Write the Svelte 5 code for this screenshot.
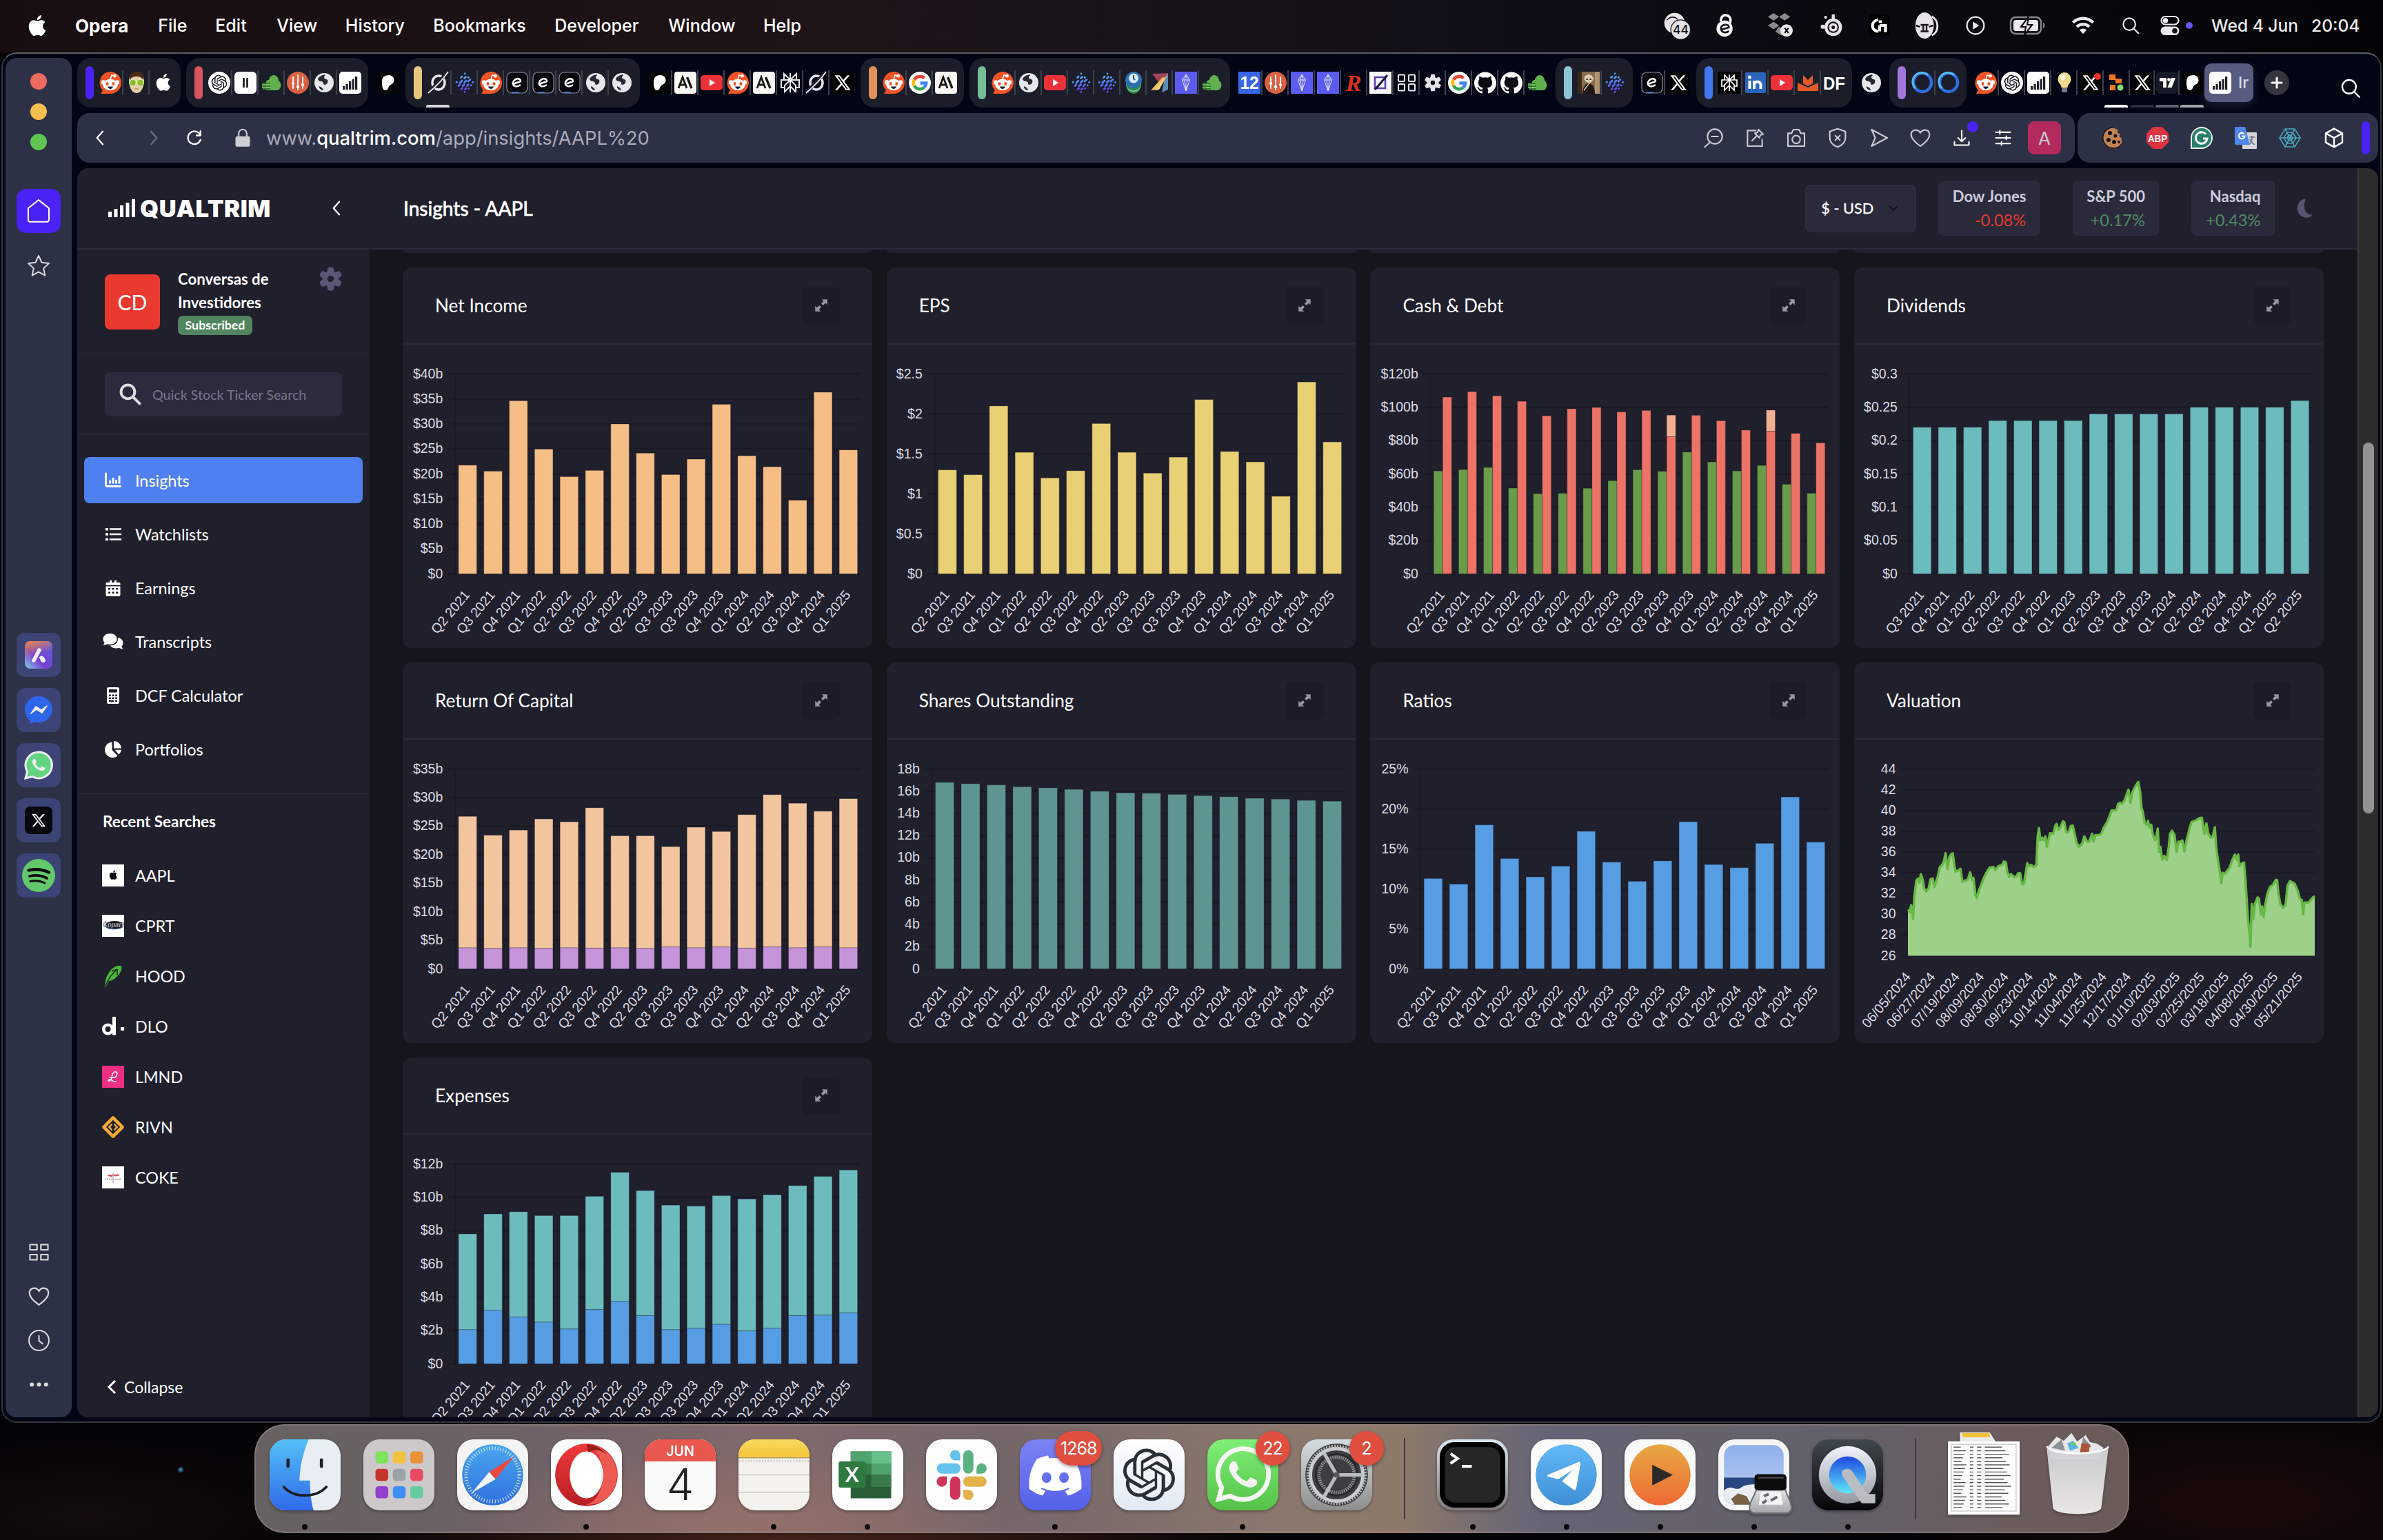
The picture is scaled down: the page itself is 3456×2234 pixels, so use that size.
<script>
  const P = {
    apple: 'M12.152 6.896c-.948 0-2.415-1.078-3.96-1.04-2.04.027-3.91 1.183-4.961 3.014-2.117 3.675-.546 9.103 1.519 12.09 1.013 1.454 2.208 3.09 3.792 3.039 1.52-.065 2.09-.987 3.935-.987 1.831 0 2.35.987 3.96.948 1.637-.026 2.676-1.48 3.676-2.948 1.156-1.688 1.636-3.325 1.662-3.415-.039-.013-3.182-1.221-3.22-4.857-.026-3.04 2.48-4.494 2.597-4.559-1.429-2.09-3.623-2.324-4.39-2.376-2-.156-3.675 1.09-4.61 1.09zM15.53 3.83c.843-1.012 1.4-2.427 1.245-3.83-1.207.052-2.662.805-3.532 1.818-.78.896-1.454 2.338-1.273 3.714 1.338.104 2.715-.688 3.559-1.701',
    x: 'M18.901 1.153h3.68l-8.04 9.19L24 22.846h-7.406l-5.8-7.584-6.638 7.584H.474l8.6-9.83L0 1.154h7.594l5.243 6.932ZM17.61 20.644h2.039L6.486 3.24H4.298Z',
    gpt: 'M22.2819 9.8211a5.9847 5.9847 0 0 0-.5157-4.9108 6.0462 6.0462 0 0 0-6.5098-2.9A6.0651 6.0651 0 0 0 4.9807 4.1818a5.9847 5.9847 0 0 0-3.9977 2.9 6.0462 6.0462 0 0 0 .7427 7.0966 5.98 5.98 0 0 0 .511 4.9107 6.051 6.051 0 0 0 6.5146 2.9001A5.9847 5.9847 0 0 0 13.2599 24a6.0557 6.0557 0 0 0 5.7718-4.2058 5.9894 5.9894 0 0 0 3.9977-2.9001 6.0557 6.0557 0 0 0-.7475-7.0729zm-9.022 12.6081a4.4755 4.4755 0 0 1-2.8764-1.0408l.1419-.0804 4.7783-2.7582a.7948.7948 0 0 0 .3927-.6813v-6.7369l2.02 1.1686a.071.071 0 0 1 .038.052v5.5826a4.504 4.504 0 0 1-4.4945 4.4944zm-9.6607-4.1254a4.4708 4.4708 0 0 1-.5346-3.0137l.142.0852 4.783 2.7582a.7712.7712 0 0 0 .7806 0l5.8428-3.3685v2.3324a.0804.0804 0 0 1-.0332.0615L9.74 19.9502a4.4992 4.4992 0 0 1-6.1408-1.6464zM2.3408 7.8956a4.485 4.485 0 0 1 2.3655-1.9728V11.6a.7664.7664 0 0 0 .3879.6765l5.8144 3.3543-2.0201 1.1685a.0757.0757 0 0 1-.071 0l-4.8303-2.7865A4.504 4.504 0 0 1 2.3408 7.872zm16.5963 3.8558L13.1038 8.364 15.1192 7.2a.0757.0757 0 0 1 .071 0l4.8303 2.7913a4.4944 4.4944 0 0 1-.6765 8.1042v-5.6772a.79.79 0 0 0-.407-.667zm2.0107-3.0231l-.142-.0852-4.7735-2.7818a.7759.7759 0 0 0-.7854 0L9.409 9.2297V6.8974a.0662.0662 0 0 1 .0284-.0615l4.8303-2.7866a4.4992 4.4992 0 0 1 6.6802 4.66zM8.3065 12.863l-2.02-1.1638a.0804.0804 0 0 1-.038-.0567V6.0742a4.4992 4.4992 0 0 1 7.3757-3.4537l-.142.0805L8.704 5.459a.7948.7948 0 0 0-.3927.6813zm1.0976-2.3654l2.602-1.4998 2.6069 1.4998v2.9994l-2.5974 1.4997-2.6067-1.4997Z',
    github: 'M12 .297c-6.63 0-12 5.373-12 12 0 5.303 3.438 9.8 8.205 11.385.6.113.82-.258.82-.577 0-.285-.01-1.04-.015-2.04-3.338.724-4.042-1.61-4.042-1.61C4.422 18.07 3.633 17.7 3.633 17.7c-1.087-.744.084-.729.084-.729 1.205.084 1.838 1.236 1.838 1.236 1.07 1.835 2.809 1.305 3.495.998.108-.776.417-1.305.76-1.605-2.665-.3-5.466-1.332-5.466-5.93 0-1.31.465-2.38 1.235-3.22-.135-.303-.54-1.523.105-3.176 0 0 1.005-.322 3.3 1.23.96-.267 1.98-.399 3-.405 1.02.006 2.04.138 3 .405 2.28-1.552 3.285-1.23 3.285-1.23.645 1.653.24 2.873.12 3.176.765.84 1.23 1.91 1.23 3.22 0 4.61-2.805 5.625-5.475 5.92.42.36.81 1.096.81 2.22 0 1.606-.015 2.896-.015 3.286 0 .315.21.69.825.57C20.565 22.092 24 17.592 24 12.297c0-6.627-5.373-12-12-12',
    phone: 'M17.472 14.382c-.297-.149-1.758-.867-2.03-.967-.273-.099-.471-.148-.67.15-.197.297-.767.966-.94 1.164-.173.199-.347.223-.644.075-.297-.15-1.255-.463-2.39-1.475-.883-.788-1.48-1.761-1.653-2.059-.173-.297-.018-.458.13-.606.134-.133.298-.347.446-.52.149-.174.198-.298.298-.497.099-.198.05-.371-.025-.52-.075-.149-.669-1.612-.916-2.207-.242-.579-.487-.5-.669-.51-.173-.008-.371-.01-.57-.01-.198 0-.52.074-.792.372-.272.297-1.04 1.016-1.04 2.479 0 1.462 1.065 2.875 1.213 3.074.149.198 2.096 3.2 5.077 4.487.709.306 1.262.489 1.694.625.712.227 1.36.195 1.871.118.571-.085 1.758-.719 2.006-1.413.248-.694.248-1.289.173-1.413-.074-.124-.272-.198-.57-.347',
    bubble: 'm12.051 21.785h-.004a9.87 9.87 0 01-5.031-1.378l-.361-.214-3.741.982.998-3.648-.235-.374a9.86 9.86 0 01-1.51-5.26c.001-5.45 4.436-9.884 9.888-9.884 2.64 0 5.122 1.03 6.988 2.898a9.825 9.825 0 012.893 6.994c-.003 5.45-4.437 9.884-9.885 9.884m8.413-18.297A11.815 11.815 0 0012.05 0C5.495 0 .16 5.335.157 11.892c0 2.096.547 4.142 1.588 5.945L.057 24l6.305-1.654a11.882 11.882 0 005.683 1.448h.005c6.554 0 11.89-5.335 11.893-11.893a11.821 11.821 0 00-3.48-8.413z',
    discord: 'M20.317 4.3698a19.7913 19.7913 0 00-4.8851-1.5152.0741.0741 0 00-.0785.0371c-.211.3753-.4447.8648-.6083 1.2495-1.8447-.2762-3.68-.2762-5.4868 0-.1636-.3933-.4058-.8742-.6177-1.2495a.077.077 0 00-.0785-.037 19.7363 19.7363 0 00-4.8852 1.515.0699.0699 0 00-.0321.0277C.5334 9.0458-.319 13.5799.0992 18.0578a.0824.0824 0 00.0312.0561c2.0528 1.5076 4.0413 2.4228 5.9929 3.0294a.0777.0777 0 00.0842-.0276c.4616-.6304.8731-1.2952 1.226-1.9942a.076.076 0 00-.0416-.1057c-.6528-.2476-1.2743-.5495-1.8722-.8923a.077.077 0 01-.0076-.1277c.1258-.0943.2517-.1923.3718-.2914a.0743.0743 0 01.0776-.0105c3.9278 1.7933 8.18 1.7933 12.0614 0a.0739.0739 0 01.0785.0095c.1202.099.246.1981.3728.2924a.077.077 0 01-.0066.1276 12.2986 12.2986 0 01-1.873.8914.0766.0766 0 00-.0407.1067c.3604.698.7719 1.3628 1.225 1.9932a.076.076 0 00.0842.0286c1.961-.6067 3.9495-1.5219 6.0023-3.0294a.077.077 0 00.0313-.0552c.5004-5.177-.8382-9.6739-3.5485-13.6604a.061.061 0 00-.0312-.0286zM8.02 15.3312c-1.1825 0-2.1569-1.0857-2.1569-2.419 0-1.3332.9555-2.4189 2.157-2.4189 1.2108 0 2.1757 1.0952 2.1568 2.419 0 1.3332-.9555 2.4189-2.1569 2.4189zm7.9748 0c-1.1825 0-2.1569-1.0857-2.1569-2.419 0-1.3332.9554-2.4189 2.1569-2.4189 1.2108 0 2.1757 1.0952 2.1568 2.419 0 1.3332-.946 2.4189-2.1568 2.4189Z'
  };

  const spin = (n, markup, c = 16) =>
    Array.from({ length: n }, (_, i) => `<g transform="rotate(${(i * 360) / n} ${c} ${c})">${markup}</g>`).join('');
  const bars = (color) =>
    [[5, 21, 5], [9.5, 18, 8], [14, 14, 12], [18.5, 11, 15], [23, 7, 19]]
      .map(([x, y, h]) => `<rect x="${x}" y="${y}" width="3.2" height="${h}" fill="${color}"/>`).join('');
  const ui = (d, w = 1.6, extra = '') =>
    `<path d="${d}" fill="none" stroke="currentColor" stroke-width="${w}" stroke-linecap="round" stroke-linejoin="round"/>${extra}`;

  // name: [viewBox size, markup]
  const glyphs = {
    reddit: [32, `<path d="M16 0a16 16 0 1 1 0 32H2l3-5A16 16 0 0 1 16 0z" fill="#f05326"/><path d="M16 11l2-6 4 1" stroke="#fff" stroke-width="1.6" fill="none"/><circle cx="22.5" cy="6.2" r="2.4" fill="#fff"/><circle cx="6" cy="15.5" r="3.2" fill="#fff"/><circle cx="26" cy="15.5" r="3.2" fill="#fff"/><ellipse cx="16" cy="19" rx="10.8" ry="8.2" fill="#fff"/><ellipse cx="11.6" cy="17.6" rx="2.1" ry="2.6" fill="#f05326"/><ellipse cx="20.4" cy="17.6" rx="2.1" ry="2.6" fill="#f05326"/><path d="M12 21.6h8c-.6 2.400-2 3.400-4 3.400s-3.400-1-4-3.400z" fill="#22252b"/>`],
    avatar: [32, `<path d="M5 12c0-6 4-9 11-9s11 3 11 9c0 8-3 19-11 19S5 20 5 12z" fill="#e6d0a8"/><path d="M6 12C4 4 9 0 16 0c8 0 12 4 10 12-3-4-6-5-10-5S9 8 6 12z" fill="#4a2b17"/><circle cx="10.500" cy="16" r="4.800" fill="#8bbf2f" stroke="#e9efc8" stroke-width="1"/><circle cx="21.500" cy="16" r="4.800" fill="#8bbf2f" stroke="#e9efc8" stroke-width="1"/><path d="M13 25h6" stroke="#b98e63" stroke-width="1.500"/>`],
    apple: [32, `<g transform="translate(4.500 3) scale(1.030)"><path d="${P.apple}" fill="#fff"/></g>`],
    gpt: [32, `<circle cx="16" cy="16" r="16" fill="#fff"/><g transform="translate(4.600 4.600) scale(.95)"><path d="${P.gpt}" fill="#15151a"/></g>`],
    pause: [32, `<rect width="32" height="32" rx="6" fill="#fff"/><path d="M13.500 9v14M18.500 9v14" stroke="#15151a" stroke-width="2.600"/>`],
    money: [32, `<path d="M8 26V14c2-2 3-2 4-2 1-5 4-7 7-7 4 0 7 4 7 8 3 2 4 6 3 9-1 3-3 5-6 5H8z" fill="#61b04e"/><path d="M2 17h11M2 21h12M3 25h11" stroke="#2f7a2f" stroke-width="1.800"/><path d="M2 19h10M2 23h11" stroke="#8bd173" stroke-width="1.300"/>`],
    fork: [32, `<circle cx="16" cy="16" r="16" fill="#dc6043"/><path d="M9 8v9M16 5v21M23 8v9M9 17v7M23 17v7" stroke="#fff" stroke-width="1.800" stroke-linecap="round"/><circle cx="9" cy="17" r="2" fill="#fff"/><circle cx="23" cy="19" r="2" fill="#fff"/><circle cx="16" cy="22" r="2.200" fill="#fff"/>`],
    globe: [32, `<circle cx="16" cy="16" r="14" fill="#e6e7ea"/><path d="M17 4c-4 1-9 3-10 7 2 4 5 2 7 4 2 1 0 4 3 4 4-1 5-4 4-7-2-2-5-1-5-4 0-2 3-2 1-4zM9 21c2 1 6 3 6 6-4-.5-6.500-3-6-6z" fill="#262a37"/>`],
    qualtrim: [32, `<rect width="32" height="32" rx="5" fill="#fff"/>${bars('#20202c')}`],
    patreon: [32, `<rect width="32" height="32" rx="3" fill="#050505"/><path d="M8 14c0-6 4-9 10-9 5 0 8 4 7.500 8-.5 4-4 5.500-6.500 7-2 2-2 7-6 7-5 0-5-8-5-13z" fill="#fff"/>`],
    slashO: [32, `<ellipse cx="16" cy="16" rx="9" ry="10" fill="none" stroke="#e8e8ee" stroke-width="3.400"/><path d="M29 1L2 30" stroke="#20222e" stroke-width="5"/><path d="M30 0C24 9 14 20 1 31" stroke="#e8e8ee" stroke-width="1.800" fill="none"/>`],
    diamonds: [32, `<g stroke-width="2.800" stroke-linecap="round"><path d="M16 3v.1M10.500 8.500l1.500-1.500M15.500 9.500l2-2M21 8l.5.5" stroke="#5aa0f2"/><path d="M4 15.500l.5-.5M9 16l3-3M15.500 15.500l2.500-2.500M21 14l3-2.500M27.500 15.500l.3-.3" stroke="#5486f5"/><path d="M7 20.500l2-2M13 21l2.500-2.500M19.500 20.500l2-2M25 20l.3-.3" stroke="#5a6bf3"/><path d="M11 25.500l1.500-1.500M16.500 25.500l1.500-1.500M21.500 24.500l.3-.3M16 29.500v.1" stroke="#6d4bf0"/></g>`],
    e: [32, `<rect x="1" y="1" width="30" height="30" rx="7" fill="#08080c" stroke="#8d8da0" stroke-width="1.200"/><path d="M8 30h10" stroke="#3c8cf0" stroke-width="1.600"/><path d="M10 18l11-4c0-3-3-4.500-6-3.500S9 15 10 18c1 3.500 6 4.500 10 1.500" fill="none" stroke="#fff" stroke-width="2.600" stroke-linecap="round" stroke-linejoin="round"/>`],
    anth: [32, `<rect width="32" height="32" rx="4" fill="#faf9f3"/><path d="M6 24l6-16 6 16M8.500 19h7" fill="none" stroke="#1c1a18" stroke-width="2.800"/><path d="M18.500 8l6.500 16" stroke="#1c1a18" stroke-width="3.400"/>`],
    youtube: [32, `<rect y="5" width="32" height="22" rx="5" fill="#ec3139"/><path d="M13 11l8 5-8 5z" fill="#fff"/>`],
    perplex: [32, `<g fill="none" stroke="#e8e8ee" stroke-width="2"><path d="M16 2v28M7 3l9 9 9-9v9H7zM7 12H3v11h5M25 12h4v11h-5M16 12l-8 8v9l8-8 8 8v-9z"/></g>`],
    perplexB: [32, `<rect width="32" height="32" fill="#000"/><g fill="none" stroke="#fff" stroke-width="1.700"><path d="M16 4v24M9 5l7 7 7-7v7H9zM9 12H5v9h4M23 12h4v9h-4M16 12l-7 7v8l7-7 7 7v-8z"/></g>`],
    x: [32, `<rect width="32" height="32" fill="#000"/><g transform="translate(4.500 4) scale(.97 1)"><path d="${P.x}" fill="#f0f0f3"/></g>`],
    xDot: [32, `<rect width="32" height="32" fill="#000"/><g transform="translate(4.500 4) scale(.97 1)"><path d="${P.x}" fill="#f0f0f3"/></g><circle cx="26" cy="7" r="5" fill="#e8302c"/>`],
    google: [32, `<circle cx="16" cy="16" r="16" fill="#fff"/><g fill="none" stroke-width="4.600"><path d="M22.500 9.500A9.200 9.200 0 0 0 8 11.500" stroke="#ea4335"/><path d="M8 11.500a9.200 9.200 0 0 0 0 9" stroke="#fbbc05"/><path d="M8 20.500a9.200 9.200 0 0 0 14 2.500" stroke="#34a853"/><path d="M22 23a9.200 9.200 0 0 0 3.200-6.500H16.500" stroke="#4285f4"/></g>`],
    stack: [32, `<circle cx="16" cy="22" r="10" fill="#2f8a43"/><circle cx="16" cy="18" r="11" fill="#9ad0a5"/><circle cx="16" cy="16.500" r="11" fill="#2e8a55"/><circle cx="16" cy="12" r="12" fill="#2a6fae"/><circle cx="16" cy="9.500" r="7" fill="#dbe9f4"/><path d="M16 5v5l2 2" stroke="#2a4f80" stroke-width="2" fill="none"/>`],
    arrow: [32, `<path d="M5 3l23-1-1 14L14 15z" fill="#a3435a"/><path d="M3 27L20 8l5 1-11 17z" fill="#eac15b"/><path d="M28 3v23l-9 4 4-20z" fill="#5d8cb8"/><path d="M28 3L9 27l6-1z" fill="#f3d48a"/>`],
    violet: [32, `<rect width="32" height="32" fill="#5a5cf0"/><path d="M16 4l5.500 8-5.500 16-5.500-16zM10.500 12h11M16 4l-2 8 2 16 2-16z" fill="none" stroke="#e3e3ff" stroke-width="1"/>`],
    twelve: [32, `<rect width="32" height="32" fill="#3a66e8"/><text x="16" y="25" font-family="Liberation Sans, sans-serif" font-weight="700" font-size="25" fill="#fff" text-anchor="middle" textLength="27" lengthAdjust="spacingAndGlyphs">12</text>`],
    r: [32, `<text x="15" y="28" font-family="Liberation Serif, serif" font-style="italic" font-weight="700" font-size="34" fill="#d9301f" text-anchor="middle">R</text>`],
    z: [32, `<rect width="32" height="32" fill="#f5f5fa"/><path d="M8 8h15v16H8z" fill="none" stroke="#5b3fb0" stroke-width="2.500"/><path d="M8 26L26 5" stroke="#1c1740" stroke-width="3"/>`],
    grid: [32, `<g fill="none" stroke="#e9e9ef" stroke-width="2"><rect x="4" y="4.500" width="9" height="9.500" rx="1.500"/><rect x="19" y="4.500" width="9" height="9.500" rx="1.500"/><rect x="4" y="18" width="9" height="9.500" rx="1.500"/><rect x="19" y="18" width="9" height="9.500" rx="1.500"/></g>`],
    gear: [32, `<circle cx="16" cy="16" r="7" fill="none" stroke="currentColor" stroke-width="6"/>${spin(6, '<path d="M12 8l1.300-5.500q2.700-.8 5.400 0L20 8z" fill="currentColor" stroke="currentColor" stroke-width="1.500" stroke-linejoin="round"/>')}`],
    gearTab: [32, `<circle cx="16" cy="16" r="5.700" fill="none" stroke="#e3e4e8" stroke-width="5"/>${spin(6, '<path d="M13 9l1-4.500h4L19 9z" fill="#e3e4e8" stroke="#e3e4e8" stroke-width="1.500" stroke-linejoin="round"/>')}`],
    github: [32, `<circle cx="16" cy="16" r="15" fill="#0b0c14"/><g transform="scale(1.333)"><path d="${P.github}" fill="#fff"/></g>`],
    photo: [32, `<rect width="32" height="32" fill="#8a6d4e"/><rect width="6" height="32" fill="#3a281a"/><rect x="25" width="7" height="32" fill="#b09472"/><ellipse cx="16" cy="10" rx="6.500" ry="6" fill="#d5cbb8"/><path d="M7 32c0-9 4-15 9-15s9 5 9 15z" fill="#1d1815"/><path d="M12.500 11h2.500M17.500 11H20" stroke="#3a2c20" stroke-width="2"/><path d="M9 27L23 9" stroke="#e3cba0" stroke-width="1.300"/>`],
    linkedin: [32, `<rect x="1" y="1" width="30" height="30" rx="2" fill="#2a66bd"/><path d="M7.500 13v12M14 13v12M14 19c0-6 9.500-6 9.500 0v6" stroke="#fff" stroke-width="4" fill="none"/><circle cx="7.500" cy="8" r="2.500" fill="#fff"/>`],
    fox: [32, `<path d="M9 5l7 7 7-7v14H9z" fill="#e35b25"/><path d="M1 16h30v12H1z" fill="#e35b25"/><path d="M1 16h6l9 5 9-5h6l-15 7z" fill="#1b1d29"/>`],
    df: [32, `<text x="16" y="25.500" font-family="Liberation Sans, sans-serif" font-weight="700" font-size="26" fill="#fff" text-anchor="middle" textLength="32" lengthAdjust="spacingAndGlyphs">DF</text>`],
    ring: [32, `<ellipse cx="16" cy="15.500" rx="13" ry="13.500" fill="none" stroke="#2c6fdf" stroke-width="4.500"/><path d="M6 24A13 13 0 0 1 24 5" fill="none" stroke="#58b8f0" stroke-width="3"/>`],
    bulb: [32, `<path d="M16 1a9.500 9.500 0 0 1 9.500 10c0 6-5 7-5 12h-9c0-5-5-6-5-12A9.500 9.500 0 0 1 16 1z" fill="#f7d98a"/><ellipse cx="14" cy="8" rx="4" ry="5" fill="#fff6da"/><rect x="12" y="23" width="8" height="7" rx="2" fill="#777a80"/>`],
    blocks: [32, `<g fill="#ee7623"><rect x="5" y="4" width="9" height="8"/><rect x="14" y="10" width="9" height="7"/><rect x="6" y="19" width="8" height="8"/></g><circle cx="21" cy="23" r="4.500" fill="#7ddc72"/>`],
    tv: [32, `<rect width="32" height="32" rx="5" fill="#161a26"/><path d="M5 9h10v14h-5v-9H5z" fill="#fff"/><circle cx="18.500" cy="11.500" r="2.300" fill="#fff"/><path d="M22 9h6l-5.500 14h-6z" fill="#fff"/>`],
    plus: [36, `<circle cx="18" cy="18" r="18" fill="#33353f"/><path d="M18 11v14M11 18h14" stroke="#fff" stroke-width="3" stroke-linecap="round"/>`],
    // browser chrome
    search: [24, ui('M10.500 3.500a7 7 0 1 1 0 14 7 7 0 0 1 0-14zM15.700 15.700L21 21', 1.7)],
    searchBold: [24, ui('M9.500 2.500a7 7 0 1 1 0 14 7 7 0 0 1 0-14zM15 15l6.500 6.500', 2.8)],
    left: [24, ui('M14.500 4L7.500 12l7 8', 2)],
    right: [24, ui('M9.500 4l7 8-7 8', 2)],
    down: [24, ui('M4 8l8 8 8-8', 2.6)],
    reload: [24, ui('M19.500 14.500A8 8 0 1 1 19 8M19.500 3.500V9h-5', 2)],
    lock: [24, `<rect x="3" y="10" width="18" height="13" rx="2" fill="currentColor"/><path d="M7 11V6.500a5 5 0 0 1 10 0V11" fill="none" stroke="currentColor" stroke-width="1.800"/>`],
    zoomOut: [24, ui('M13.500 2.500a8 8 0 1 1 0 16 8 8 0 0 1 0-16zM8 17L2.500 22M10 10.500h7')],
    note: [24, ui('M13 4H4v17h16v-7M9 15l5-5M12 7l5 5 1-3 3-1-5-5-1 3z')],
    camera: [24, ui('M3 7h4l2-4h6l2 4h4v14H3zM12 9.500a4.300 4.300 0 1 1 0 8.600 4.300 4.300 0 0 1 0-8.600z')],
    shield: [24, ui('M12 2l8.500 3v7c0 5-3.500 8-8.500 10-5-2-8.500-5-8.500-10V5zM9.500 9.500l5 5M14.500 9.500l-5 5')],
    send: [24, ui('M4 3l17 9-17 9 4-9z')],
    heart: [24, ui('M12 21C5 16 2 12.500 2 8.500 2 3 9 1.500 12 6.500c3-5 10-3.500 10 2C22 12.500 19 16 12 21z')],
    download: [24, ui('M12 3v13M7.500 12l4.500 4.500 4.500-4.500M3 17v4h18v-4', 1.800)],
    sliders: [24, ui('M3 5h18M3 12h18M3 19h18M8 3v4M16 10v4M10 17v4', 1.800)],
    cube: [24, ui('M12 2l9 5v10l-9 5-9-5V7zM3 7l9 5 9-5M12 12v10', 1.800)],
    home: [24, ui('M2.500 9.500L12 2l9.500 7.500V20a2 2 0 0 1-2 2h-15a2 2 0 0 1-2-2z', 1.300)],
    star: [24, ui('M12 2l3 6.500 7 .8-5.200 4.800 1.400 7-6.200-3.500-6.200 3.500 1.400-7L2 9.300l7-.8z', 1.300)],
    apps: [24, ui('M2.500 4h7.500v5.500H2.500zM14 4h7.500v5.500H14zM2.500 14.500h7.500V20H2.500zM14 14.500h7.500V20H14z', 1.500)],
    clock: [24, ui('M12 1.500a10.500 10.500 0 1 1 0 21 10.500 10.500 0 0 1 0-21zM12 7v5.500l4 3', 1.500)],
    dots: [24, `<circle cx="4.500" cy="12" r="2.200" fill="currentColor"/><circle cx="12" cy="12" r="2.200" fill="currentColor"/><circle cx="19.500" cy="12" r="2.200" fill="currentColor"/>`],
    cookie: [32, `<path d="M17 1a15 15 0 1 0 13 20c-3 0-3-3-2-5-4 0-4-3-2-6-4 0-5-3-3-6-3 0-5-1-6-3z" fill="#c08457"/><g fill="#1b120d"><circle cx="11" cy="9" r="3"/><circle cx="19" cy="13" r="2.600"/><circle cx="9" cy="19" r="3"/><circle cx="17" cy="22" r="3"/><circle cx="24" cy="22" r="2"/></g><path d="M17 1a15 15 0 1 0 13 20" fill="none" stroke="#1b120d" stroke-width="1.300"/>`],
    abp: [32, `<path d="M9.500 0h13L32 9.500v13L22.500 32h-13L0 22.500v-13z" fill="#dd3442"/><text x="16" y="21.500" font-family="Liberation Sans, sans-serif" font-weight="700" font-size="15" fill="#fff" text-anchor="middle" textLength="28" lengthAdjust="spacingAndGlyphs">ABP</text>`],
    grammarly: [32, `<path d="M16 0a16 16 0 0 1 0 32H0V16A16 16 0 0 1 16 0z" fill="#e8efec"/><path d="M16 2a14 14 0 0 1 0 28H2V16A14 14 0 0 1 16 2z" fill="#2a7f6a"/><path d="M22 10.500A8.300 8.300 0 1 0 24 17h-6" fill="none" stroke="#fff" stroke-width="3"/>`],
    translate: [32, `<rect x="11" y="8" width="21" height="24" rx="1" fill="#d5d7da"/><path d="M21 15h9M25 13v3c0 5-2 8-5 10M22 18c1 4 4 6 7 8" stroke="#6d7885" stroke-width="1.700" fill="none"/><path d="M0 0h15l7 26H2a2 2 0 0 1-2-2z" fill="#4f86ec"/><path d="M13.500 10.200a4.300 4.300 0 1 0 1 3.300h-4" fill="none" stroke="#fff" stroke-width="2"/>`],
    web: [32, `<g fill="none" stroke="#49a6b8" stroke-width="1.600"><path d="M9 3h14l8 13-8 13H9L1 16zM12 8h8l5 8-5 8h-8l-5-8zM14 12h4l2 4-2 4h-4l-2-4zM9 3l14 26M23 3L9 29M1 16h30"/></g>`],
    // panel apps
    aria: [40, `<defs><linearGradient id="ar" x1="0" y1="1" x2="1" y2="0"><stop offset="0" stop-color="#7fd6ea"/><stop offset=".4" stop-color="#7a3ccf"/><stop offset="1" stop-color="#5a63dd"/></linearGradient><linearGradient id="ar2" x1="0" y1="0" x2=".3" y2="1"><stop offset="0" stop-color="#f08a4a"/><stop offset=".6" stop-color="#f08a4a" stop-opacity="0"/></linearGradient></defs><rect width="40" height="40" rx="8" fill="url(#ar)"/><rect width="40" height="40" rx="8" fill="url(#ar2)"/><path d="M13 28L21 13" stroke="#ececf4" stroke-width="5.500" stroke-linecap="round"/><path d="M23.500 22c2 0 5 2 6 6.500-2 3-5 2-6-.5-.5-2-1-3-2-4z" fill="#ececf4" stroke="#ececf4" stroke-width="1.500" stroke-linejoin="round"/>`],
    messenger: [40, `<path d="M20 0c11 0 20 8.500 20 19S31 38 20 38c-2 0-4-.3-6-.8L8 40l-.5-5C3 31 0 26 0 19 0 8.500 9 0 20 0z" fill="#2e66ea"/><path d="M9 25l7-10 8 5 8-6-7 10-8-5z" fill="#eef0fb" stroke="#eef0fb" stroke-width="1.500" stroke-linejoin="round"/>`],
    whatsapp: [40, `<path d="M20 1a19 19 0 1 1-9 35.500L1 39l2.600-9.500A19 19 0 0 1 20 1z" fill="#63d480" stroke="#ececf2" stroke-width="3"/><g transform="translate(1.500 1) scale(1.540)"><path d="${P.phone}" fill="#ececf2"/></g>`],
    xApp: [40, `<rect width="40" height="40" rx="8" fill="#08090d"/><g transform="translate(10 10) scale(.84)"><path d="${P.x}" fill="#e6e6ea"/></g>`],
    spotify: [48, `<circle cx="24" cy="24" r="24" fill="#63c76c"/><g fill="none" stroke="#0c0f0c" stroke-linecap="round"><path d="M9.500 16.500c10-2.500 20-1.500 29.500 3" stroke-width="4.500"/><path d="M11 25c8.500-2 17-1.300 25 3" stroke-width="3.800"/><path d="M12 32.500c7.500-1.500 14-1 21 2.500" stroke-width="3"/></g>`],
    // app navigation
    chart: [24, `<path d="M1.500 2v16.500a2 2 0 0 0 2 2h19" fill="none" stroke="currentColor" stroke-width="2.800" stroke-linecap="round"/><path d="M7.500 12v4.500M12 8v8.500M16.500 11v5.500M21 5v11.500" stroke="currentColor" stroke-width="3"/>`],
    list: [24, `<path d="M8 4.500h15M8 12h15M8 19.500h15" stroke="currentColor" stroke-width="2.600" stroke-linecap="round"/><path d="M1 3h4v3.500H1zM1 10.300h4v3.500H1zM1 17.700h4v3.500H1z" fill="currentColor"/>`],
    calendar: [24, `<path d="M3 4h4V1h3v3h4V1h3v3h4a1.500 1.500 0 0 1 1.500 1.500V8h-21V5.500A1.500 1.500 0 0 1 3 4z" fill="currentColor"/><path d="M1.500 9.500h21V22a2 2 0 0 1-2 2h-17a2 2 0 0 1-2-2z" fill="currentColor"/><path d="M5 12h3v2.500H5zM10.500 12h3v2.500h-3zM16 12h3v2.500h-3zM5 17.500h3V20H5zM10.500 17.500h3V20h-3zM16 17.500h3V20h-3z" fill="#201f2c"/>`],
    chat: [30, `<path d="M10.500 3c6 0 10 3.500 10 8s-4 8-10 8c-1.500 0-3-.2-4.200-.7C4.500 19.500 2.500 20 .5 20c1-1.200 2-2.500 2-4C1 14.500.5 13 .5 11c0-4.500 4-8 10-8z" fill="currentColor"/><path d="M22 9c4.500.7 7.500 3.800 7.500 7.500 0 2-.7 3.600-2 5 0 1.500 1 2.800 2 4-2 0-4-.5-5.800-1.700-1.200.4-2.500.7-4.200.7-4 0-7-1.500-8.500-4 6.500 0 11.500-4 11-11.500z" fill="currentColor"/>`],
    calc: [24, `<rect x="3" y="0" width="18" height="24" rx="2.500" fill="currentColor"/><path d="M6 3h12v4.500H6zM6 10.500h2.800V13H6zM10.600 10.500h2.800V13h-2.800zM15.200 10.500H18V13h-2.800zM6 14.500h2.800V17H6zM10.600 14.500h2.800V17h-2.800zM15.200 14.500H18V17h-2.800zM6 18.700h7.400v2.500H6zM15.200 18.700H18v2.500h-2.800z" fill="#201f2c"/>`],
    pie: [24, `<path d="M10.500 1.500v11.500l8 8.500A11.300 11.300 0 1 1 10.500 1.500z" fill="currentColor"/><path d="M13 0a11 11 0 0 1 11 10.500H13zM14.500 12.800H24a11 11 0 0 1-3.500 6.800z" fill="currentColor"/>`],
    moon: [24, `<path d="M13 1C6 2 3 7 3 12c0 6 4.500 11 11 11 3 0 5-1.300 6.500-3.500C13.500 20.500 8 12 13 1z" fill="currentColor"/>`],
    expand: [24, `<path d="M13 1.500h9.500V11l-3-3-4.500 4-3-3 4-4.500zM11 22.500H1.500V13l3 3L9 12l3 3-4 4.500z" fill="currentColor"/>`],
    tAapl: [32, `<rect width="32" height="32" fill="#fff"/><g transform="translate(9.500 8.500) scale(.56)"><path d="${P.apple}" fill="#111"/></g>`],
    tCprt: [32, `<rect width="32" height="32" fill="#fff"/><ellipse cx="18" cy="15" rx="13" ry="6" fill="#16181c"/><path d="M6 18c5 3 18 4 25-1" stroke="#3a5c8a" fill="none" stroke-width="1.500"/><text x="16" y="18" font-family="Liberation Sans, sans-serif" font-style="italic" font-weight="700" font-size="10" fill="#d9dce0" text-anchor="middle" textLength="30" lengthAdjust="spacingAndGlyphs" stroke="#33363c" stroke-width=".4">Copart</text>`],
    tHood: [32, `<path d="M4 31C5 24 5 18 10 11 14 5 20 0 28 1c1 5-1 11-6 15-3 4-8 7-12 7l-4 8z" fill="#4bb53a"/><path d="M5 30C9 20 14 13 22 6M22 6v9M14 9l8-3" stroke="#1d2b22" stroke-width="1.500" fill="none"/>`],
    tDlo: [32, `<circle cx="8.500" cy="20" r="6.300" fill="none" stroke="#fff" stroke-width="4.600"/><path d="M17.500 2v26.500" stroke="#fff" stroke-width="5"/><rect x="27" y="17" width="5" height="5" fill="#fff"/>`],
    tLmnd: [32, `<rect width="32" height="32" fill="#ec2f80"/><path d="M20 9c-3-1-5 2-5.500 6S12 23 9.500 22s2-3 4.500-1 4 3 6 2M11 17h8c3-3 4-8 1-8" fill="none" stroke="#fff" stroke-width="1.500" stroke-linecap="round"/>`],
    tRivn: [32, `<path d="M16 2.500L29.500 16 16 29.500 2.500 16z" fill="none" stroke="#f0aa35" stroke-width="4.600" stroke-linejoin="round"/><path d="M14.500 10l-6 6 6 6v-3.500L12 16l2.500-2.500zM17.500 10l6 6-6 6v-3.500L20 16l-2.500-2.500z" fill="#f0aa35"/>`],
    tCoke: [32, `<rect width="32" height="32" fill="#fff"/><path d="M9 14c2-3 4 2 6-1s3 2 6 0 2 1 3 0" stroke="#e0393e" stroke-width="2" fill="none"/><path d="M4 18.500h24" stroke="#999" stroke-width="1.500" stroke-dasharray="2 1"/><path d="M16 9v15" stroke="#bbb" stroke-width="1.500"/>`],
    // menu bar
    mCloud: [48, `<circle cx="19" cy="20" r="17" fill="#e6e4e6"/><path d="M6 15c6-7 14-6 18-1" stroke="#1a171c" fill="none" stroke-width="2"/><circle cx="29" cy="31" r="17" fill="#17141a"/><circle cx="29" cy="31" r="15.500" fill="#e6e4e6"/><text x="29" y="38" font-family="Inter, sans-serif" font-size="20" fill="#17141a" text-anchor="middle">44</text>`],
    mE: [40, `<path d="M13 13c0-9 6-11 11-9 5 3 6 8 3 13" fill="none" stroke="#fff" stroke-width="4"/><circle cx="19" cy="25" r="13" fill="#fff"/><path d="M13 27l13-4c0-4-4-5-8-4s-6 5-4 9 8 4 12 1" fill="none" stroke="#16131a" stroke-width="3"/>`],
    mBox: [40, `<path d="M9 0l9 6-9 6-9-6zM27 0l9 6-9 6-9-6zM9 14l9 6-9 6-9-6zM18 22l9 6-5 8-10-6z" fill="#8a888c"/><circle cx="30" cy="28" r="10" fill="#e9e8ea"/><path d="M27 24l6 8M33 24l-6 8" stroke="#111" stroke-width="2.500"/>`],
    mSteel: [40, `<circle cx="22" cy="23" r="15" fill="#e6e4e6"/><circle cx="22" cy="23" r="8.500" fill="none" stroke="#16131a" stroke-width="2.500"/><circle cx="22" cy="23" r="3" fill="#16131a"/><path d="M22 10V1" stroke="#e6e4e6" stroke-width="5"/><circle cx="4" cy="22" r="3.500" fill="#e6e4e6"/><circle cx="9" cy="6" r="2.500" fill="#e6e4e6"/>`],
    mG: [34, `<rect width="34" height="34" rx="8" fill="#000"/><path d="M16 8c-12 2-12 17 0 18M19 13v-4M18 17h9v10M18 17v9" stroke="#fff" stroke-width="4.500" fill="none"/>`],
    mPi: [40, `<path d="M28 6c12 7 11 24 0 29" fill="none" stroke="#e6e4e6" stroke-width="3"/><ellipse cx="17" cy="20" rx="14" ry="20" fill="#e6e4e6"/><path d="M4 20l6 2M24 22l6-2" stroke="#16131a" stroke-width="2.500" fill="none"/><path d="M11 19h12M11 29h12M15 19v10M20 19v10" stroke="#16131a" stroke-width="2.500"/>`],
    mPlay: [32, `<circle cx="16" cy="16" r="13.200" fill="none" stroke="#eceaec" stroke-width="2.400"/><path d="M12 10l10 6-10 6z" fill="#eceaec"/>`],
    mBatt: [52, `<rect x="2" y="14" width="44" height="24" rx="7" fill="none" stroke="#8b888d" stroke-width="2.500"/><rect x="6" y="18" width="36" height="16" rx="3.500" fill="#eceaec"/><path d="M49 22c3 1 3 7 0 8z" fill="#8b888d"/><path d="M28 13L17 28h7l-2 12 11-15h-7z" fill="#eceaec" stroke="#0d0b10" stroke-width="2.200"/>`],
    mWifi: [36, `<g fill="none" stroke="#eceaec" stroke-width="4.600"><path d="M2.500 13.500a22 22 0 0 1 31 0M8.500 20a13.500 13.500 0 0 1 19 0"/></g><path d="M18 31l-5.500-6a8 8 0 0 1 11 0z" fill="#eceaec"/>`],
    mCtl: [28, `<rect x="1.500" y="1" width="25" height="11.500" rx="5.700" fill="none" stroke="#eceaec" stroke-width="2.200"/><circle cx="7.500" cy="6.700" r="3.800" fill="#eceaec"/><rect x=".5" y="15.500" width="27" height="12.500" rx="6.200" fill="#eceaec"/><circle cx="21" cy="21.700" r="3.800" fill="#16131a"/>`]
  };

  // dock artwork on a 100-unit square tile
  const tile = (fill) => `<rect width="100" height="100" rx="23" fill="${fill}"/>`;
  const grad = (id, a, b) =>
    `<defs><linearGradient id="${id}" x1="0" y1="0" x2="0" y2="1"><stop offset="0" stop-color="${a}"/><stop offset="1" stop-color="${b}"/></linearGradient></defs>`;
  const pads = [['#7ee35a', '#f2c23f', '#e8923a'], ['#c4342a', '#9aa3a8', '#e94a63'], ['#9340cf', '#3f8ef5', '#67cba0']];
  const dockArt = {
    finder: grad('dk1', '#54c1f7', '#2f69ea') + tile('#e9edf4') + `<path d="M23 0h32C46 22 43 38 42 58h15c0 14 1 30 5 42H23A23 23 0 0 1 0 77V23A23 23 0 0 1 23 0z" fill="url(#dk1)"/><path d="M26 29v9M73 29v9" stroke="#1d2330" stroke-width="4.500" stroke-linecap="round"/><path d="M20 67c14 16 45 16 60 0" fill="none" stroke="#1a1d26" stroke-width="3.500" stroke-linecap="round"/>`,
    launchpad: tile('#cdc9ca') + pads.map((r, j) => r.map((c, i) => `<rect x="${17 + i * 24.500}" y="${17 + j * 24.500}" width="18" height="17" rx="4.500" fill="${c}"/>`).join('')).join(''),
    safari: grad('dk2', '#4aa7ef', '#2f6fdd') + tile('#f4f4f5') + `<circle cx="50" cy="50" r="43" fill="url(#dk2)"/><circle cx="50" cy="50" r="37.500" fill="none" stroke="#dcebfa" stroke-width="5" stroke-dasharray="1 2.900"/><path d="M80 24L54 56 45 46z" fill="#ea4a3c"/><path d="M20 76l34-20-9-10z" fill="#f1f3f6"/>`,
    opera: grad('dk3', '#f0393b', '#b51f25') + tile('#fff') + `<ellipse cx="50" cy="50" rx="44" ry="44" fill="url(#dk3)"/><path d="M50 8c24 0 43 18 43 42S76 93 50 92c14-4 23-20 23-42S64 12 50 8z" fill="#ee5a52"/><path d="M50 7c12 0 22 6 30 16-8-8-18-10-27-5z" fill="#95201c"/><ellipse cx="50" cy="50" rx="23.500" ry="33" fill="#fff"/>`,
    calendar: tile('#fbfafa') + `<path d="M0 31V23A23 23 0 0 1 23 0h54a23 23 0 0 1 23 23v8z" fill="#e9574e"/><text x="50" y="23" font-family="Inter, sans-serif" font-weight="600" font-size="19" fill="#fff" text-anchor="middle">JUN</text><text x="50" y="85" font-family="Inter, sans-serif" font-weight="300" font-size="61" fill="#222" text-anchor="middle">4</text>`,
    notes: grad('dk4', '#f9d95e', '#f5c838') + tile('#f3f2ed') + `<path d="M0 25v-2A23 23 0 0 1 23 0h54a23 23 0 0 1 23 23v2z" fill="url(#dk4)"/><path d="M0 26h100" stroke="#b39a55" stroke-width="1.500"/><path d="M0 50h100M0 75h100" stroke="#cfcec9" stroke-width="1.500"/><path d="M1 30.500h98" stroke="#bdbbb4" stroke-width="2" stroke-dasharray="2 2"/>`,
    excel: tile('#fff') + `<path d="M26 17h57v66H26z" fill="#2a5e39"/><path d="M26 17h29v17H26z" fill="#4fa36e"/><path d="M55 17h28v17H55z" fill="#66c28a"/><path d="M26 34h29v16H26z" fill="#387e4b"/><path d="M55 34h28v16H55z" fill="#4fa36e"/><path d="M55 50h28v17H55z" fill="#3a7c49"/><rect x="9" y="31" width="38" height="37" rx="3" fill="#2f7a41"/><text x="28" y="60" font-family="Lato, sans-serif" font-weight="700" font-size="29" fill="#fff" text-anchor="middle">X</text>`,
    slack: tile('#fdfdfd') + `<g stroke-width="14.500" stroke-linecap="round"><path d="M22.500 41h19" stroke="#64c3ec"/><path d="M59.500 22.500V41" stroke="#5cb182"/><path d="M59.500 59.500h18.500" stroke="#e3b34a"/><path d="M41 59.500V78" stroke="#cf3459"/></g><path d="M41 15a7.200 7.200 0 0 0 0 14.500h7.200V22A7.200 7.200 0 0 0 41 15z" fill="#64c3ec"/><path d="M85.500 41a7.200 7.200 0 0 0-14.500 0v7.200h7.200A7.200 7.200 0 0 0 85.500 41z" fill="#5cb182"/><path d="M59.500 85.500a7.200 7.200 0 0 0 0-14.500h-7.200v7.200a7.200 7.200 0 0 0 7.200 7.300z" fill="#e3b34a"/><path d="M15 59.500a7.200 7.200 0 0 0 14.500 0v-7.200H22a7.200 7.200 0 0 0-7 7.200z" fill="#cf3459"/>`,
    discord: grad('dk5', '#7b83f2', '#5560ea') + tile('url(#dk5)') + `<g transform="translate(13 14) scale(3.080)"><path d="${P.discord}" fill="#fff"/></g>`,
    chatgpt: grad('dk6', '#ffffff', '#e2e9f3') + tile('url(#dk6)') + `<g transform="translate(13 13) scale(3.080)"><path d="${P.gpt}" fill="#2a3038"/></g>`,
    whatsapp: grad('dk7', '#7fef78', '#55c247') + tile('url(#dk7)') + `<g transform="translate(11 10) scale(3.280)"><path d="${P.phone}" fill="#f5f6f4"/><path d="${P.bubble}" fill="#f5f6f4"/></g>`,
    settings: grad('dk8', '#d4dde2', '#8f8f8d') + tile('url(#dk8)') + `<circle cx="50" cy="50" r="44" fill="#3c3e40"/><circle cx="50" cy="50" r="37" fill="none" stroke="#c7cccf" stroke-width="5"/><circle cx="50" cy="50" r="40.500" fill="none" stroke="#b9bec1" stroke-width="4" stroke-dasharray="1.900 2"/><circle cx="50" cy="50" r="25" fill="none" stroke="#8f9496" stroke-width="5" stroke-dasharray="1.500 1.500"/><circle cx="50" cy="50" r="29" fill="none" stroke="#26282a" stroke-width="2.500"/><path d="M50 50h36M50 50L32 19M50 50L32 81" stroke="#b8bdc0" stroke-width="5"/><circle cx="50" cy="50" r="4" fill="#55585a"/>`,
    terminal: grad('dk9', '#d7e8f2', '#7c7b78') + tile('url(#dk9)') + `<rect x="4" y="4" width="92" height="92" rx="20" fill="#000"/><rect x="11" y="11" width="78" height="78" rx="14" fill="#262626"/><path d="M19 20l10 7-10 7" fill="none" stroke="#fff" stroke-width="4"/><path d="M35 38h14" stroke="#fff" stroke-width="4"/>`,
    telegram: grad('dk10', '#62b9f7', '#3f8fd6') + tile('#fafafa') + `<circle cx="50" cy="50" r="43" fill="url(#dk10)"/><path d="M24 50l43-18c2-1 3 1 3 3l-6 34c-1 3-3 3-5 1L44 59l15-16-20 13-13-3c-3-1-3-2-2-3z" fill="#fff"/>`,
    player: grad('dk11', '#e7a844', '#ee6a33') + tile('#fafafa') + `<circle cx="50" cy="50" r="43" fill="url(#dk11)"/><path d="M39 36l29 14-29 15z" fill="#2b2a28"/>`,
    preview: grad('dk12', '#8fb0ec', '#bcd0f3') + grad('dk12b', '#e4e5e8', '#a4a6aa') + tile('#f6f6f6') + `<rect x="8" y="8" width="84" height="84" rx="15" fill="url(#dk12)"/><path d="M8 54h84v23a15 15 0 0 1-15 15H23A15 15 0 0 1 8 77z" fill="#27457e"/><path d="M8 72c10-10 16 2 24-4s20-4 34-6v30H23A15 15 0 0 1 8 77z" fill="#e9eef4"/><path d="M18 84l10-8 12 4 6 12H23z" fill="#7a6145"/><path d="M54 69h40c2 10 9 18 9 27q0 8-9 8H53q-9 0-9-8c0-9 8-17 10-27z" fill="url(#dk12b)" stroke="#6d6f74" stroke-width="2"/><path d="M60 74h28l3 18H57z" fill="#f4f4f6"/><path d="M64 80l7-3M74 86l9-5M62 90l6-4" stroke="#6a6c70" stroke-width="4"/><path d="M51 54q0-5 6-5h33q6 0 6 5v13q0 5-6 5H57q-6 0-6-5z" fill="#0d0d0e"/><path d="M56 54h36" stroke="#4a4b4e" stroke-width="2"/>`,
    quicktime: grad('dk13', '#41484f', '#060607') + grad('dk13b', '#f1f4ff', '#9498a0') + grad('dk13c', '#1e49e0', '#5fe6fa') + tile('url(#dk13)') + `<circle cx="50" cy="50" r="40.500" fill="url(#dk13b)"/><circle cx="50" cy="50" r="26" fill="url(#dk13c)"/><path d="M43 44c6-5 12-2 15 3l20 30h11v13H70L44 54c-2-4-3-8-1-10z" fill="#b9bcc2"/>`,
    doc: `<path d="M17-10h42l8 13H17z" fill="#e9e9ea"/><path d="M20-9h39v6H20z" fill="#f0c23c"/><path d="M0 3h101v103H0z" fill="#fff"/><path d="M5 7h91v94H5z" fill="none" stroke="#cfcfcf" stroke-width="1.500"/>` +
      Array.from({ length: 18 }, (_, i) => `<path d="M8 ${11 + i * 5}h${10 + ((i * 7) % 9)}M31 ${11 + i * 5}h5M41 ${11 + i * 5}h6M52 ${11 + i * 5}h${24 + ((i * 5) % 14)}" stroke="#55565a" stroke-width="1.400"/>`).join(''),
    trash: grad('dk14', '#cfcfd2', '#f1f0ee') + `<path d="M9 10l12-14 10 6L42-9l8 12 12-9 6 10 10 2 9 6-6 16H14z" fill="#e6e6e8"/><path d="M14 12l14-12 5 16zM58-4l12 14-14 8z" fill="#8f9196"/><path d="M36 6l8-4 8 10-12 4z" fill="#5ab3e0"/><path d="M56 5l12 2-2 14-12-3z" fill="#a9543c"/><path d="M40 8l5-5 4 4z" fill="#7bc950"/><path d="M7 12c8 11 78 11 87 0l-10 84c-2 12-66 12-68 0z" fill="url(#dk14)" opacity=".95"/><path d="M7 10c6 13 80 13 87 0" fill="none" stroke="#fafafa" stroke-width="2.500"/>`
  };

  const menus = [['Opera', 120.3], ['File', 83], ['Edit', 89], ['View', 99.5], ['History', 127.5], ['Bookmarks', 176], ['Developer', 165], ['Window', 137.6], ['Help', 60]];
  const status = [
    ['mCloud', 68, 42], ['mE', 70, 36], ['mBox', 90, 36], ['mSteel', 59, 34], ['mG', 78, 32], ['mPi', 60, 38],
    ['mPlay', 82, 30], ['mBatt', 68, 52], ['mWifi', 94, 34], ['search', 44, 30], ['mCtl', 70, 28]
  ];

  const tabGroups = [
    { color: '#4b22f2', tabs: ['reddit', 'avatar', 'apple'] },
    { color: '#d9545f', tabs: ['gpt', 'pause', 'money', 'fork', 'globe', 'qualtrim'] },
    { tabs: ['patreon'] },
    { color: '#e6c77f', tabs: ['slashO', 'diamonds', 'reddit', 'e', 'e', 'e', 'globe', 'globe'], marks: { 0: '#d6d7dc' } },
    { tabs: ['patreon', 'anth', 'youtube', 'reddit', 'anth', 'perplex', 'slashO', 'x'] },
    { color: '#e3935a', tabs: ['reddit', 'google', 'anth'] },
    { color: '#74bf97', tabs: ['reddit', 'globe', 'youtube', 'diamonds', 'diamonds', 'stack', 'arrow', 'violet', 'money'] },
    { tabs: ['twelve', 'fork', 'violet', 'violet', 'r', 'z', 'grid', 'gearTab', 'google', 'github', 'github', 'money'] },
    { color: '#8cc4d6', tabs: ['photo', 'diamonds'] },
    { tabs: ['e', 'x'] },
    { color: '#4478f0', tabs: ['perplexB', 'linkedin', 'youtube', 'fox', 'df'] },
    { tabs: ['globe'] },
    { color: '#a377dd', tabs: ['ring', 'ring'] },
    { tabs: ['reddit', 'gpt', 'qualtrim', 'bulb', 'xDot', 'blocks', 'x', 'tv', 'patreon'], narrowFrom: 6, marks: { 5: '#ffffff', 6: '#2c2e3a', 7: '#60626c', 8: '#a3a4aa' } }
  ];

  const nav = [['Insights', 'chart'], ['Watchlists', 'list'], ['Earnings', 'calendar'], ['Transcripts', 'chat'], ['DCF Calculator', 'calc'], ['Portfolios', 'pie']];
  const recent = [['AAPL', 'tAapl'], ['CPRT', 'tCprt'], ['HOOD', 'tHood'], ['DLO', 'tDlo'], ['LMND', 'tLmnd'], ['RIVN', 'tRivn'], ['COKE', 'tCoke']];
  const indices = [['Dow Jones', '-0.08%', false], ['S&P 500', '+0.17%', true], ['Nasdaq', '+0.43%', true]];

  const quarters = ['Q2 2021', 'Q3 2021', 'Q4 2021', 'Q1 2022', 'Q2 2022', 'Q3 2022', 'Q4 2022', 'Q2 2023', 'Q3 2023', 'Q3 2023', 'Q4 2023', 'Q1 2024', 'Q2 2024', 'Q3 2024', 'Q4 2024', 'Q1 2025'];
  const divQuarters = ['Q3 2021', 'Q4 2021', 'Q1 2022', 'Q2 2022', 'Q3 2022', 'Q4 2022', 'Q1 2023', 'Q2 2023', 'Q3 2023', 'Q4 2023', 'Q1 2024', 'Q2 2024', 'Q3 2024', 'Q4 2024', 'Q1 2025', 'Q2 2025'];
  const TOP = 42.5, BOTTOM = 332.5, RIGHT = 664.8;

  // stacks: groups of series drawn side by side; series inside a stack pile up
  const charts = [
    { title: 'Net Income', left: 75.8, max: 40, ticks: ['$0', '$5b', '$10b', '$15b', '$20b', '$25b', '$30b', '$35b', '$40b'], labels: quarters,
      stacks: [[{ color: '#f5be85', data: [21.74, 20.55, 34.64, 24.97, 19.45, 20.7, 30, 24.16, 19.87, 22.96, 33.92, 23.64, 21.43, 14.74, 36.35, 24.8] }]] },
    { title: 'EPS', left: 69.3, max: 2.5, ticks: ['$0', '$0.5', '$1', '$1.5', '$2', '$2.5'], labels: quarters,
      stacks: [[{ color: '#e9d074', data: [1.3, 1.24, 2.1, 1.52, 1.2, 1.29, 1.88, 1.52, 1.26, 1.46, 2.18, 1.53, 1.4, 0.97, 2.4, 1.65] }]] },
    { title: 'Cash & Debt', left: 87.3, max: 120, ticks: ['$0', '$20b', '$40b', '$60b', '$80b', '$100b', '$120b'], labels: quarters,
      stacks: [
        [{ color: '#689c48', data: [61.8, 62.6, 63.9, 51.5, 48.1, 48.3, 51.4, 55.9, 62.5, 61.6, 73.1, 67.2, 61.8, 65.1, 53.8, 48.4] }],
        [{ color: '#ec7366', data: [106.1, 109.4, 106.9, 103.6, 94.9, 99.1, 99.9, 97.2, 98.1, 82.4, 95.2, 91.9, 86.3, 85.7, 84.3, 78.6] },
         { color: '#f2b193', data: [0, 0, 0, 0, 0, 0, 0, 0, 0, 12.9, 0, 0, 0, 12.6, 0, 0] }]
      ] },
    { title: 'Dividends', left: 80.4, max: 0.3, ticks: ['$0', '$0.05', '$0.1', '$0.15', '$0.2', '$0.25', '$0.3'], labels: divQuarters,
      stacks: [[{ color: '#6cbcbd', data: [0.22, 0.22, 0.22, 0.23, 0.23, 0.23, 0.23, 0.24, 0.24, 0.24, 0.24, 0.25, 0.25, 0.25, 0.25, 0.26] }]] },
    { title: 'Return Of Capital', left: 75.8, max: 35, ticks: ['$0', '$5b', '$10b', '$15b', '$20b', '$25b', '$30b', '$35b'], labels: quarters,
      stacks: [[{ color: '#c694d8', data: [3.7, 3.6, 3.7, 3.6, 3.7, 3.65, 3.7, 3.6, 3.85, 3.7, 3.85, 3.65, 3.85, 3.7, 3.85, 3.7] },
        { color: '#f3c59f', data: [23, 19.8, 20.6, 22.65, 22.05, 24.55, 19.6, 19.7, 17.55, 21.1, 20.2, 23.35, 26.65, 25.3, 23.75, 26.1] }]] },
    { title: 'Shares Outstanding', left: 65.3, max: 18, ticks: ['0', '2b', '4b', '6b', '8b', '10b', '12b', '14b', '16b', '18b'], labels: quarters,
      stacks: [[{ color: '#5e9590', data: [16.79, 16.67, 16.56, 16.4, 16.3, 16.16, 15.99, 15.85, 15.81, 15.71, 15.6, 15.5, 15.36, 15.29, 15.17, 15.1] }]] },
    { title: 'Ratios', left: 73, max: 25, ticks: ['0%', '5%', '10%', '15%', '20%', '25%'], labels: quarters,
      stacks: [[{ color: '#569de3', data: [11.3, 10.6, 18, 13.8, 11.5, 12.85, 17.2, 13.35, 10.95, 13.5, 18.4, 13.05, 12.65, 15.7, 21.5, 15.85] }]] },
    { title: 'Valuation', line: true, left: 78 },
    { title: 'Expenses', left: 75.8, max: 12, ticks: ['$0', '$2b', '$4b', '$6b', '$8b', '$10b', '$12b'], labels: quarters,
      stacks: [[{ color: '#569de3', data: [2.06, 3.23, 2.82, 2.51, 2.1, 3.27, 3.76, 2.9, 2.06, 2.14, 2.38, 1.98, 2.14, 2.9, 2.93, 3.06] },
        { color: '#6cbcbd', data: [5.74, 5.77, 6.31, 6.39, 6.8, 6.79, 7.74, 7.5, 7.47, 7.33, 7.72, 7.92, 8.01, 7.8, 8.32, 8.58] }]] }
  ];

  const layoutBars = (c) => {
    const pitch = (RIGHT - c.left) / c.labels.length;
    const w = (pitch * 0.72) / c.stacks.length;
    const out = [];
    c.labels.forEach((_, i) => {
      const x0 = c.left + pitch * (i + 0.14);
      c.stacks.forEach((stack, s) => {
        let base = 0;
        for (const series of stack) {
          const v = series.data[i];
          if (!v) continue;
          const h = (v / c.max) * (BOTTOM - TOP);
          const y = BOTTOM - (base / c.max) * (BOTTOM - TOP) - h;
          out.push({ x: x0 + s * w, y, w, h, color: series.color });
          base += v;
        }
      });
    });
    return out;
  };

  const peDates = ['06/05/2024', '06/27/2024', '07/19/2024', '08/09/2024', '08/30/2024', '09/23/2024', '10/14/2024', '11/04/2024', '11/25/2024', '12/17/2024', '01/10/2025', '02/03/2025', '02/25/2025', '03/18/2025', '04/08/2025', '04/30/2025', '05/21/2025'];
  // offset along the axis (0-627) and P/E value in fortieths above 26
  const pe = '0,178 3,170 5,195 8,142 10,230 13,290 16,298 18,282 20,315 23,292 25,260 28,248 32,260 35,295 38,298 41,265 44,290 46,305 49,340 53,352 55,360 58,395 61,335 64,380 67,392 69,395 71,360 73,325 77,328 81,335 84,285 88,290 92,292 96,322 99,290 101,300 104,235 106,222 110,255 114,280 118,305 122,325 126,340 132,342 135,330 139,345 145,350 148,363 151,360 153,325 156,305 159,315 163,305 167,305 170,318 173,318 176,275 179,280 181,310 184,357 187,345 190,350 194,342 198,350 200,460 202,492 204,445 207,455 209,445 212,460 214,420 216,440 219,472 224,470 227,500 229,508 232,485 235,495 239,518 241,515 244,475 248,478 251,500 254,502 257,470 260,435 264,420 269,435 272,460 276,440 279,438 284,470 286,440 289,465 294,465 298,470 302,495 307,515 311,540 314,560 321,560 324,585 327,590 330,585 334,600 337,620 340,640 343,590 346,630 350,650 353,662 355,670 358,630 360,570 362,555 365,510 368,505 370,520 372,495 375,505 377,470 381,445 383,460 385,490 387,400 389,420 392,370 395,385 399,370 402,420 404,470 407,482 411,465 414,400 417,440 421,440 423,445 426,402 430,450 434,490 437,515 444,522 449,530 453,532 457,470 460,510 463,470 467,455 470,460 473,495 475,420 478,365 481,320 483,280 485,320 488,315 493,330 496,340 500,370 504,390 507,370 509,390 511,345 514,355 518,360 520,300 522,220 524,140 527,80 528,35 530,200 532,140 535,200 539,225 541,220 544,160 546,190 548,150 551,200 554,240 558,265 563,275 567,292 569,292 571,240 574,200 578,185 582,195 585,270 589,288 596,278 601,250 604,220 607,215 609,160 611,205 617,205 621,215 624,225 627,230'
    .split(' ').map((p) => p.split(',').map(Number));
  const PE_BOTTOM = 313.5, PE_RIGHT = 668;
  const peLine = pe.map(([x, v]) => `${(78 + (x / 627) * (PE_RIGHT - 78)).toFixed(1)},${(PE_BOTTOM - (v / 720) * (PE_BOTTOM - TOP)).toFixed(1)}`).join(' ');
  const peTicks = [26, 28, 30, 32, 34, 36, 38, 40, 42, 44];

  const dock = [
    { art: 'finder', run: true }, { art: 'launchpad' }, { art: 'safari' }, { art: 'opera', run: true }, { art: 'calendar' }, { art: 'notes', run: true },
    { art: 'excel', run: true }, { art: 'slack' }, { art: 'discord', run: true, badge: '1268' }, { art: 'chatgpt' }, { art: 'whatsapp', run: true, badge: '22' },
    { art: 'settings', badge: '2' }, { sep: true }, { art: 'terminal', run: true }, { art: 'telegram', run: true }, { art: 'player', run: true },
    { art: 'preview', run: true }, { art: 'quicktime', run: true }, { sep: true }, { art: 'doc' }, { art: 'trash' }
  ];
</script>

{#snippet icon(name, size)}
  <svg class="ic" width={size} height={size} viewBox="0 0 {glyphs[name][0]} {glyphs[name][0]}">{@html glyphs[name][1]}</svg>
{/snippet}

<div class="desktop">
  <header class="menubar">
    <span class="apple"><svg width="30" height="32" viewBox="0 0 24 24"><path d={P.apple} fill="#fff" /></svg></span>
    {#each menus as [label, w]}<span class="menu" style="width:{w}px">{label}</span>{/each}
    <div class="status">
      {#each status as [name, w, size]}<span class="st" style="width:{w}px">{@render icon(name, size)}</span>{/each}
      <i class="mic"></i>
      <span class="date">Wed 4 Jun</span><span class="time">20:04</span>
    </div>
  </header>

  <div class="window">
    <aside class="rail">
      <div class="lights"><i class="red"></i><i class="amber"></i><i class="green"></i></div>
      <div class="home">{@render icon('home', 38)}</div>
      <div class="star">{@render icon('star', 36)}</div>
      <div class="pins">
        {#each [['aria', 40], ['messenger', 40], ['whatsapp', 40], ['xApp', 40], ['spotify', 48]] as [n, s]}
          <div class="pin">{@render icon(n, s)}</div>
        {/each}
      </div>
      <div class="tools">
        {#each ['apps', 'heart', 'clock', 'dots'] as n}<div>{@render icon(n, 33)}</div>{/each}
      </div>
    </aside>

    <div class="browser">
      <div class="tabs">
        {#each tabGroups as g}
          <div class="group" class:loose={!g.color}>
            {#if g.color}<i class="stripe" style="background:{g.color}"></i>{/if}
            {#each g.tabs as t, i}
              <span class="tab" class:narrow={g.narrowFrom && i >= g.narrowFrom} class:last={i === g.tabs.length - 1}>
                {@render icon(t, 32)}
                {#if g.marks?.[i]}<i class="mark" style="background:{g.marks[i]}"></i>{/if}
              </span>
            {/each}
          </div>
        {/each}
        <span class="active">{@render icon('qualtrim', 32)}<b>Ir</b></span>
        <span class="plus">{@render icon('plus', 36)}</span>
        <span class="find">{@render icon('search', 34)}</span>
      </div>

      <div class="bars">
        <div class="address">
          <span class="back">{@render icon('left', 28)}</span>
          <span class="fwd">{@render icon('right', 28)}</span>
          <span class="reload">{@render icon('reload', 28)}</span>
          <span class="lock">{@render icon('lock', 28)}</span>
          <span class="url">www.<b>qualtrim.com</b>/app/insights/AAPL%20</span>
          <div class="actions">
            {#each ['zoomOut', 'note', 'camera', 'shield', 'send', 'heart'] as n}<span>{@render icon(n, 32)}</span>{/each}
            <span class="bright">{@render icon('download', 28)}<i class="dot"></i></span>
            <span class="bright">{@render icon('sliders', 28)}</span>
            <span><b class="user">A</b></span>
          </div>
        </div>
        <div class="extensions">
          {#each ['cookie', 'abp', 'grammarly', 'translate', 'web', 'cube'] as n}<span>{@render icon(n, 32)}</span>{/each}
          <i></i>
        </div>
      </div>

      <div class="page">
        <aside class="sidebar">
          <div class="brand">
            <svg width="41" height="26" viewBox="0 0 41 26"><path d="M0 18h5v8H0zM8.500 14h5v12h-5zM17 9h5v17h-5zM25.500 5h5v21h-5zM34 0h5v26h-5z" fill="#fff" /></svg>
            <span>QUALTRIM</span>
            <em>{@render icon('left', 28)}</em>
          </div>
          <div class="profile">
            <div class="face">CD</div>
            <div class="who"><strong>Conversas de<br />Investidores</strong><span>Subscribed</span></div>
            <div class="cog">{@render icon('gear', 37)}</div>
          </div>
          <div class="searchwrap"><div class="search">{@render icon('searchBold', 34)}<span>Quick Stock Ticker Search</span></div></div>
          <nav>
            {#each nav as [label, ic], i}
              <div class="item" class:on={i === 0}><span>{@render icon(ic, ic === 'chat' ? 30 : 24)}</span>{label}</div>
            {/each}
          </nav>
          <div class="recent">
            <h4>Recent Searches</h4>
            {#each recent as [label, ic]}<div class="tick">{@render icon(ic, 32)}<span>{label}</span></div>{/each}
          </div>
          <div class="collapse"><svg width="14" height="22" viewBox="0 0 14 22"><path d="M12 2L3 11l9 9" fill="none" stroke="#fff" stroke-width="3" /></svg>Collapse</div>
        </aside>

        <main>
          <div class="top">
            <h1>Insights - AAPL</h1>
            <div class="currency">$ - USD {@render icon('down', 18)}</div>
            {#each indices as [name, change, up]}
              <div class="index"><b>{name}</b><span class:up>{change}</span></div>
            {/each}
            <div class="moon">{@render icon('moon', 30)}</div>
          </div>
          <div class="cards">
            {#each [0, 1, 2, 3] as _}<div class="stub"></div>{/each}
            {#each charts as c}
              <section class="card">
                <div class="head"><h2>{c.title}</h2><div class="expand">{@render icon('expand', 20)}</div></div>
                <svg class="chart" width="681" height="440" viewBox="0 0 681 440">
                  {#if c.line}
                    {#each peTicks as t, i}
                      {@const y = PE_BOTTOM - (i / 9) * (PE_BOTTOM - TOP)}
                      <path class="grid" d="M{c.left - 10} {y}H{PE_RIGHT}" />
                      <text x={c.left - 17.5} y={y + 6} text-anchor="end">{t}</text>
                    {/each}
                    <path d="M78 {PE_BOTTOM}L{peLine}L{PE_RIGHT} {PE_BOTTOM}Z" fill="#9dd088" />
                    <polyline points={peLine} fill="none" stroke="#67b845" stroke-width="3.5" stroke-linejoin="round" />
                    {#each peDates as d, i}
                      <text text-anchor="end" transform="translate({83 + i * 35.5} {PE_BOTTOM + 31}) rotate(-50)">{d}</text>
                    {/each}
                  {:else}
                    {@const pitch = (RIGHT - c.left) / c.labels.length}
                    {#each c.ticks as t, i}
                      {@const y = BOTTOM - (i / (c.ticks.length - 1)) * (BOTTOM - TOP)}
                      <path class="grid" d="M{c.left - 10} {y}H{RIGHT}" />
                      <text x={c.left - 17.5} y={y + 6} text-anchor="end">{t}</text>
                    {/each}
                    <path class="grid" d="M{c.left} {TOP}V{BOTTOM}" />
                    {#each layoutBars(c) as b}
                      <rect x={b.x} y={b.y} width={b.w} height={b.h} fill={b.color} stroke="#1f1e2c" stroke-opacity=".3" stroke-width="1" />
                    {/each}
                    {#each c.labels as l, i}
                      <text text-anchor="end" transform="translate({c.left + pitch * (i + 0.5) + 4} {BOTTOM + 31}) rotate(-50)">{l}</text>
                    {/each}
                  {/if}
                </svg>
              </section>
            {/each}
          </div>
        </main>
        <div class="scroll"><i></i></div>
      </div>
    </div>
  </div>

  <footer class="dock">
    {#each dock as d}
      {#if d.sep}
        <div class="sep"></div>
      {:else}
        <div class="app">
          <svg width="103" height="103" viewBox="0 0 100 100">{@html dockArt[d.art]}</svg>
          {#if d.badge}<b class="badge">{d.badge}</b>{/if}
          {#if d.run}<i class="run"></i>{/if}
        </div>
      {/if}
    {/each}
  </footer>
</div>

<style>
  :global(body) { background: #000; }
  .desktop {
    width: 3456px; height: 2234px; overflow: hidden; box-sizing: border-box; display: flex; flex-direction: column;
    font-family: Lato, sans-serif; color: #fff;
    background:
      radial-gradient(5px 5px at 262px 2132px, #4aa3d8, transparent),
      radial-gradient(700px 60px at 1150px 2240px, #4a261c, transparent),
      radial-gradient(500px 160px at 3250px 2180px, #1c0b0a, transparent),
      radial-gradient(420px 120px at 120px 2200px, #140c0e, transparent),
      linear-gradient(90deg, #180d10 0, #1e1418 34%, #17131a 52%, #0e0d17 66%, #040406 100%) 0 0 / 100% 76px no-repeat,
      #040305;
  }
  svg { display: block; overflow: visible; flex: none; }
  i { font-style: normal; display: block; }

  .menubar { height: 76px; flex: none; display: flex; align-items: center; box-sizing: border-box; padding: 0 34px 2px 39px; font: 500 25px Inter, sans-serif; }
  .apple { width: 70px; }
  .menu { white-space: nowrap; }
  .menu:nth-child(2) { font-weight: 700; font-size: 26px; }
  .status { margin-left: auto; display: flex; align-items: center; color: #eceaec; }
  .st { display: flex; justify-content: center; }
  .mic { width: 10px; height: 10px; border-radius: 50%; background: #5f57e6; margin: 0 27px 0 -12px; }
  .date { width: 145px; white-space: nowrap; font-size: 24.600px; }
  .time { width: 70px; font-size: 24.600px; }

  .window {
    height: 1988px; flex: none; margin: 0 2px; box-sizing: border-box; border: 2px solid #34363f; border-top-color: #5a5b64; border-radius: 22px;
    background: #020514; padding: 6px 3px 6px 4px; display: flex; gap: 8px;
  }
  .rail { width: 96px; border-radius: 16px; background: #2d3146; display: flex; flex-direction: column; align-items: center; color: #d9dae0; }
  .lights { padding-top: 22px; display: flex; flex-direction: column; gap: 20px; }
  .lights i { width: 24px; height: 24px; border-radius: 50%; }
  .red { background: #ed6a5e; } .amber { background: #f5bf4f; } .green { background: #61c554; }
  .home { margin-top: 56px; width: 64px; height: 64px; border-radius: 14px; background: #4b22f5; display: grid; place-items: center; color: #fff; }
  .star { margin-top: 30px; }
  .pins { margin-top: 514px; display: flex; flex-direction: column; gap: 16px; }
  .pin { width: 64px; height: 64px; border-radius: 12px; background: #3b4475; display: grid; place-items: center; }
  .tools { margin-top: 482px; display: flex; flex-direction: column; }
  .tools div { height: 64px; display: grid; place-items: center; }

  .browser { flex: 1; display: flex; flex-direction: column; gap: 8px; min-width: 0; }
  .tabs { height: 72px; display: flex; gap: 8px; }
  .group { display: flex; align-items: center; background: #1b1d29; border-radius: 20px; padding: 0 7px 0 12px; }
  .group.loose { background: none; padding: 0; margin: 0 -1px 0 1px; }
  .stripe { width: 12px; height: 48px; border-radius: 6px; margin-right: 5px; }
  .tab { position: relative; width: 38px; height: 72px; display: grid; place-items: center; color: #e3e4e8; }
  .tab.narrow { width: 36px; }
  .tab::after { content: ''; position: absolute; right: 0; top: 18px; width: 2px; height: 36px; background: #3d3f4b; }
  .tab.last::after { display: none; }
  .mark { position: absolute; left: 1px; bottom: 0; width: 34px; height: 4px; border-radius: 3px 3px 0 0; }
  .active {
    width: 71px; height: 56px; margin: 8px 0 0 -7px; box-sizing: border-box; padding-left: 7px; border-radius: 10px; background: #585b80; overflow: hidden;
    display: flex; align-items: center; gap: 10px; font: 500 23px Inter, sans-serif; box-shadow: 0 6px 14px #585b8044;
  }
  .active b { font-weight: 500; color: #d9dae6; }
  .plus { margin: 18px 0 0 8px; }
  .find { margin: 27px 23px 0 auto; }

  .bars { height: 72px; display: flex; gap: 4px; }
  .address { width: 2897px; border-radius: 18px; background: #2d3146; display: flex; align-items: center; }
  .back { margin-left: 20px; } .fwd { margin-left: 48px; color: #6d7080; } .reload { margin-left: 32px; }
  .lock { margin-left: 42px; color: #cfd0d6; } .url { margin-left: 20px; }
  .url { font: 400 27.400px Inter, sans-serif; color: #a9acba; white-space: nowrap; }
  .url b { font-weight: 500; color: #fff; }
  .actions { margin-left: auto; padding-right: 14px; display: flex; color: #c9cad2; }
  .actions span { position: relative; width: 60px; height: 48px; display: grid; place-items: center; }
  .actions .bright { color: #fff; }
  .dot { position: absolute; top: 0; right: 6px; width: 16px; height: 16px; border-radius: 50%; background: #4b22f5; }
  .user { width: 48px; height: 48px; border-radius: 9px; background: #b32b5e; display: grid; place-items: center; font: 400 26px Inter, sans-serif; }
  .extensions { flex: 1; border-radius: 18px; background: #2d3146; display: flex; align-items: center; padding-left: 20px; }
  .extensions span { width: 64px; display: grid; place-items: center; }
  .extensions i { width: 12px; height: 48px; border-radius: 6px; background: #4b22f5; margin-left: 8px; }

  .page { height: 1812px; display: flex; border-radius: 16px; overflow: hidden; background: #15151e; }
  .sidebar { width: 424px; background: #201f2c; display: flex; flex-direction: column; flex: none; }
  .brand { height: 118px; box-sizing: border-box; border-bottom: 2px solid #2b2a3b; display: flex; align-items: center; padding-left: 45px; }
  .brand span { font: 900 34.500px Inter, sans-serif; letter-spacing: .6px; margin-left: 5px; width: 192px; }
  .brand em { margin-left: 80px; }
  .profile { height: 152px; box-sizing: border-box; border-bottom: 1px solid #2b2a3b; display: flex; padding: 36px 0 0 40px; }
  .face { width: 80px; height: 80px; border-radius: 8px; background: #ea3a30; display: grid; place-items: center; font-size: 30px; }
  .who { margin-left: 26px; width: 203px; margin-top: -10px; }
  .who strong { display: block; font-size: 22.200px; line-height: 34px; font-weight: 700; }
  .who span { display: block; width: 108px; height: 28px; border-radius: 7px; background: #50855f; font: 700 17.800px/27px Lato, sans-serif; text-align: center; margin-top: 2px; }
  .cog { color: #5a5776; margin-top: -12px; }
  .searchwrap { height: 117px; box-sizing: border-box; border-bottom: 1px solid #2b2a3b; padding: 26px 40px; }
  .search { height: 64px; border-radius: 8px; background: #2b2b3d; display: flex; align-items: center; padding-left: 20px; color: #dcdce0; }
  .search span { margin-left: 15px; color: #77758f; font-size: 19.700px; }
  nav { border-bottom: 1px solid #2b2a3b; padding: 32px 10px 31px; display: flex; flex-direction: column; gap: 11px; }
  .item { height: 67px; border-radius: 8px; display: flex; align-items: center; font-size: 23.400px; }
  .item.on { background: #4f80ef; }
  .item span { width: 84px; display: grid; place-items: center; margin-right: -10px; }
  .recent { padding: 23px 0 0 36px; }
  .recent h4 { margin: 0 0 24px 1px; font: 700 22.500px/34px Lato, sans-serif; }
  .tick { height: 73px; display: flex; align-items: center; font-size: 23.300px; }
  .tick span { margin-left: 16px; }
  .collapse { margin-top: auto; padding: 0 0 30px 43px; display: flex; align-items: center; gap: 11px; font-size: 23px; }

  main { flex: 1; min-width: 0; }
  .top { height: 118px; box-sizing: border-box; border-bottom: 2px solid #2b2a3b; background: #201f2c; display: flex; align-items: center; padding: 0 61px 0 49px; }
  h1 { margin: 0 auto 0 0; font: 400 28.100px Lato, sans-serif; -webkit-text-stroke: .7px #fff; }
  .currency { width: 161px; height: 69px; box-sizing: border-box; border: 1px solid #303043; border-radius: 8px; background: #2a2a3b; display: flex; align-items: center; gap: 20px; padding-left: 22px; font-size: 21.700px; margin-right: 32px; white-space: nowrap; -webkit-text-stroke: .3px #fff; }
  .currency :global(svg) { color: #12121c; }
  .index { height: 80px; box-sizing: border-box; padding: 5px 20.500px 0; border-radius: 8px; background: #2a2a3b; text-align: right; margin-right: 47px; font-size: 23.700px; line-height: 35px; }
  .index:nth-last-child(2) { margin-right: 29px; }
  .index b { display: block; font-size: 22px; font-weight: 700; color: #cdccdc; }
  .index span { display: block; color: #e5392f; }
  .index .up { color: #4f8a63; }
  .moon { color: #56546f; }
  .cards { height: 1694px; overflow: hidden; padding-left: 48px; display: grid; grid-template-columns: repeat(4, 681px); grid-template-rows: 5px repeat(3, 552px); gap: 21px 20.700px; }
  .stub { background: #201f2c; border-radius: 0 0 12px 12px; }
  .card { background: #201f2c; border-radius: 13px; overflow: hidden; }
  .head { height: 112px; box-sizing: border-box; border-bottom: 2px solid #292838; display: flex; align-items: center; justify-content: space-between; padding: 0 47px; }
  h2 { margin: 0; font: 400 26.200px Lato, sans-serif; }
  .expand { width: 55px; height: 55px; border-radius: 8px; background: #1c1b27; color: #9896a5; display: grid; place-items: center; }
  .chart text { font: 19.500px 'Liberation Sans', sans-serif; fill: #dcdce4; }
  .grid { stroke: #1a1924; stroke-width: 2; }
  .scroll { width: 30px; background: #2c2c2c; border-left: 2px solid #3b3b3b; box-sizing: border-box; padding: 398px 0 0 6px; }
  .scroll i { width: 16px; height: 538px; border-radius: 8px; background: #929292; }

  .dock {
    margin: 2px 0 0 369px; width: 2719px; height: 158px; flex: none; box-sizing: border-box; border: 2px solid #97888788; border-radius: 44px; display: flex; padding-left: 3px;
    background:
      radial-gradient(420px 130px at 26% 100%, #96706a, transparent),
      linear-gradient(90deg, #676061 0, #6e6266 15%, #80696b 27%, #746669 40%, #8a776d 54%, #8e7a6a 61%, #646377 69%, #65626c 76%, #62606b 84%, #6b5d5d 93%, #6b5b59 100%);
  }
  .app { position: relative; width: 136.050px; display: flex; justify-content: center; padding-top: 20px; }
  .app svg { filter: drop-shadow(0 2px 2px #0005); }
  .badge { position: absolute; right: 0; top: 8px; min-width: 50px; height: 50px; box-sizing: border-box; padding: 0 8px; border-radius: 25px; background: #e04e40; display: grid; place-items: center; font: 400 25px Inter, sans-serif; letter-spacing: -1px; box-shadow: 0 2px 5px #0006; }
  .run { position: absolute; bottom: 3px; left: 64px; width: 8px; height: 8px; border-radius: 50%; background: #0a0809; }
  .sep { width: 2px; height: 118px; margin: 18px 29.500px 0; background: #3f383a; }
</style>
